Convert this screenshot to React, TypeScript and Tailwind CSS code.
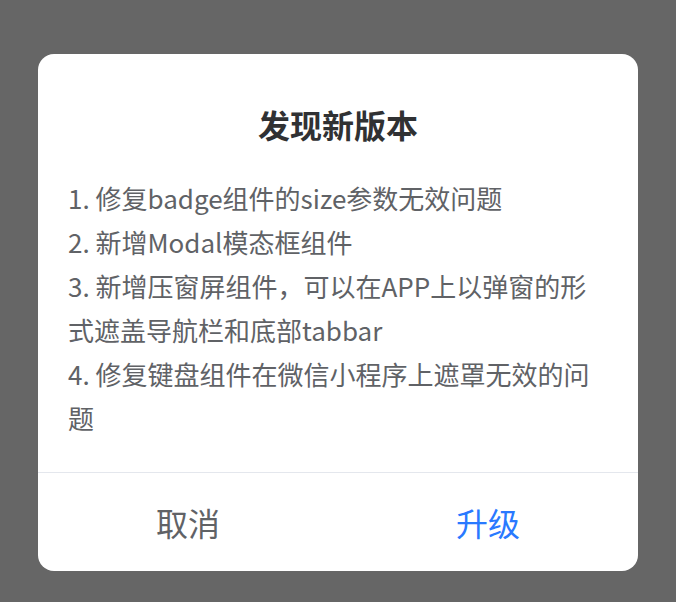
import React from "react";

const notes = [
  "1. 修复badge组件的size参数无效问题",
  "2. 新增Modal模态框组件",
  "3. 新增压窗屏组件，可以在APP上以弹窗的形式遮盖导航栏和底部tabbar",
  "4. 修复键盘组件在微信小程序上遮罩无效的问题",
];

const UpdateModal = () => {
  return (
    <div className="w-[600px] overflow-hidden rounded-[16px] bg-white">
      <div className="pt-[54px] text-center text-[32px] leading-[32px] font-bold text-[#303133]">
        发现新版本
      </div>
      <div className="px-[30px] pt-[36px] pb-[32px] text-[26px] leading-[44px] text-[#606266]">
        {notes.map((line, i) => (
          <div key={"note-" + i}>{line}</div>
        ))}
      </div>
      <div className="flex h-[99px] border-t border-[#e4e7ed]">
        <button className="flex flex-1 items-center justify-center text-[32px] text-[#606266]">
          取消
        </button>
        <button className="flex flex-1 items-center justify-center text-[32px] text-[#2979ff]">
          升级
        </button>
      </div>
    </div>
  );
};

export default function App() {
  return (
    <div
      className="flex h-[602px] w-full items-start justify-center bg-[#666666] pt-[54px]"
      style={{ fontFamily: '"Noto Sans CJK SC", "Noto Sans", sans-serif' }}
    >
      <UpdateModal />
    </div>
  );
}
